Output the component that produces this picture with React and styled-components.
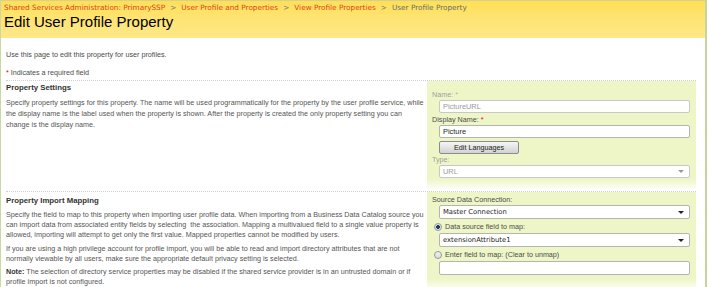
import React from "react";
import styled, { createGlobalStyle } from "styled-components";

const GlobalStyle = createGlobalStyle`
  body { margin: 0; background: #fff; }
  * { box-sizing: border-box; }
`;

const Page = styled.div`
  width: 707px;
  height: 287px;
  overflow: hidden;
  border-left: 1px solid #c9d9a6;
  border-right: 2px solid #c3d69b;
  font-family: "Liberation Sans", Arial, sans-serif;
  color: #4c4c4c;
`;

const Header = styled.header`
  height: 38px;
  border-top: 1px solid #d8d092;
  background: linear-gradient(#fee056, #fee478 55%, #fee887);
  padding: 2px 0 0 3px;
`;

const Crumbs = styled.div`
  display: flex;
  align-items: center;
  gap: 5px;
  font-family: "DejaVu Sans", Verdana, sans-serif;
  font-size: 7.3px;
  line-height: 10px;
  white-space: nowrap;
`;

const Crumb = styled.span`
  color: ${(p) => (p.$current ? "#6a6a6a" : "#e2431c")};
`;

const Sep = styled.span`
  color: #7a7a7a;
`;

const Title = styled.h1`
  margin: 0;
  font-weight: normal;
  font-size: 15px;
  line-height: 18px;
  color: #000;
`;

const Body = styled.main`
  padding: 11px 9px 0 5px;
  font-size: 7.2px;
`;

const Intro = styled.p`
  margin: 0;
  line-height: 11px;
  color: #4c4c4c;
`;

const Required = styled.p`
  margin: 7px 0 2px;
  line-height: 11px;
  color: #4c4c4c;
`;

const Star = styled.span`
  color: ${(p) => (p.$muted ? "#b0b0b0" : "#e2001a")};
`;

const Section = styled.section`
  display: grid;
  grid-template-columns: 415px 269px;
  column-gap: 6px;
  border-top: 1px dotted #cfcfcf;
  height: ${(p) => p.$height}px;
`;

const Info = styled.div`
  padding-top: ${(p) => p.$top || 1}px;
`;

const Heading = styled.h3`
  margin: 0 0 4px;
  font-size: 7.8px;
  line-height: 11px;
  color: #333;
`;

const Text = styled.p`
  margin: 0 0 ${(p) => p.$gap || 0}px;
  line-height: ${(p) => p.$lh || 11}px;
  color: #555;
  white-space: nowrap;
  b {
    color: #333;
  }
`;

const Panel = styled.div`
  background: linear-gradient(#eef6c8 calc(100% - 12px), #ffffff);
  padding: ${(p) => p.$top}px 6px 0 5px;
  display: flex;
  flex-direction: column;
`;

const Label = styled.div`
  margin-top: ${(p) => p.$mt || 0}px;
  line-height: 11px;
  color: ${(p) => (p.$disabled ? "#a0a0a0" : "#4c4c4c")};
`;

const Box = styled.div`
  margin: ${(p) => p.$mt || 0}px 0 0 7px;
  height: ${(p) => p.$h || 13}px;
  display: flex;
  align-items: center;
  padding: 0 5px 0 3px;
  background: #fff;
  border: 1px solid ${(p) => (p.$disabled ? "#c8c8c8" : "#b4b4b4")};
  border-radius: 2px;
  font-family: ${(p) => (p.$verdana ? '"DejaVu Sans", Verdana, sans-serif' : '"Liberation Sans", Arial, sans-serif')};
  font-size: ${(p) => (p.$verdana ? 6.8 : 7.4)}px;
  color: ${(p) => (p.$disabled ? "#9a9a9a" : "#1e1e1e")};
`;

const Arrow = styled.span`
  margin-left: auto;
  width: 0;
  height: 0;
  border-left: 3px solid transparent;
  border-right: 3px solid transparent;
  border-top: 3px solid ${(p) => (p.$disabled ? "#9a9a9a" : "#222")};
`;

const Button = styled.button`
  margin: 3px 0 0 7px;
  width: 80px;
  height: 13px;
  padding: 0;
  border: 1px solid #8c8c8c;
  border-radius: 2px;
  background: linear-gradient(#f6f6f6, #e4e4e4 50%, #d2d2d2);
  font-family: "Liberation Sans", Arial, sans-serif;
  font-size: 7.2px;
  color: #222;
`;

const RadioRow = styled.div`
  display: flex;
  align-items: center;
  gap: 3px;
  margin: ${(p) => p.$mt || 0}px 0 0 2px;
  line-height: 11px;
  color: #4c4c4c;
`;

const Radio = styled.span`
  width: 8px;
  height: 8px;
  border-radius: 50%;
  border: 1px solid #8f9aa6;
  background: ${(p) =>
    p.$checked
      ? "radial-gradient(circle, #2c3a48 0 1.6px, #dfe6ee 2.2px)"
      : "linear-gradient(#f2f2f2, #dcdcdc)"};
`;

export default function App() {
  return (
    <>
      <GlobalStyle />
      <Page>
        <Header>
          <Crumbs>
            <Crumb>Shared Services Administration: PrimarySSP</Crumb>
            <Sep>&gt;</Sep>
            <Crumb>User Profile and Properties</Crumb>
            <Sep>&gt;</Sep>
            <Crumb>View Profile Properties</Crumb>
            <Sep>&gt;</Sep>
            <Crumb $current>User Profile Property</Crumb>
          </Crumbs>
          <Title>Edit User Profile Property</Title>
        </Header>
        <Body>
          <Intro>Use this page to edit this property for user profiles.</Intro>
          <Required>
            <Star>*</Star> Indicates a required field
          </Required>

          <Section $height={111}>
            <Info>
              <Heading>Property Settings</Heading>
              <Text>
                Specify property settings for this property. The name will be used programmatically for the property by the user profile service, while
                <br />
                the display name is the label used when the property is shown. After the property is created the only property setting you can
                <br />
                change is the display name.
              </Text>
            </Info>
            <Panel $top={8}>
              <Label $disabled>
                Name: <Star $muted>*</Star>
              </Label>
              <Box $disabled>PictureURL</Box>
              <Label $mt={1}>
                Display Name: <Star>*</Star>
              </Label>
              <Box>Picture</Box>
              <Button>Edit Languages</Button>
              <Label $disabled>Type:</Label>
              <Box $disabled>
                URL
                <Arrow $disabled />
              </Box>
            </Panel>
          </Section>

          <Section $height={100}>
            <Info $top={3}>
              <Heading>Property Import Mapping</Heading>
              <Text $lh={10} $gap={4}>
                Specify the field to map to this property when importing user profile data. When importing from a Business Data Catalog source you
                <br />
                can import data from associated entity fields by selecting&nbsp; the association. Mapping a multivalued field to a single value property is
                <br />
                allowed, importing will attempt to get only the first value. Mapped properties cannot be modified by users.
              </Text>
              <Text $lh={10} $gap={3}>
                If you are using a high privilege account for profile import, you will be able to read and import directory attributes that are not
                <br />
                normally viewable by all users, make sure the appropriate default privacy setting is selected.
              </Text>
              <Text $lh={10}>
                <b>Note:</b> The selection of directory service properties may be disabled if the shared service provider is in an untrusted domain or if
                <br />
                profile import is not configured.
              </Text>
            </Info>
            <Panel $top={2}>
              <Label>Source Data Connection:</Label>
              <Box $verdana $h={14}>
                Master Connection
                <Arrow />
              </Box>
              <RadioRow $mt={2}>
                <Radio $checked />
                Data source field to map:
              </RadioRow>
              <Box $verdana $h={14} $mt={1}>
                extensionAttribute1
                <Arrow />
              </Box>
              <RadioRow $mt={2}>
                <Radio />
                Enter field to map: (Clear to unmap)
              </RadioRow>
              <Box $mt={1} $h={14} />
            </Panel>
          </Section>
        </Body>
      </Page>
    </>
  );
}
